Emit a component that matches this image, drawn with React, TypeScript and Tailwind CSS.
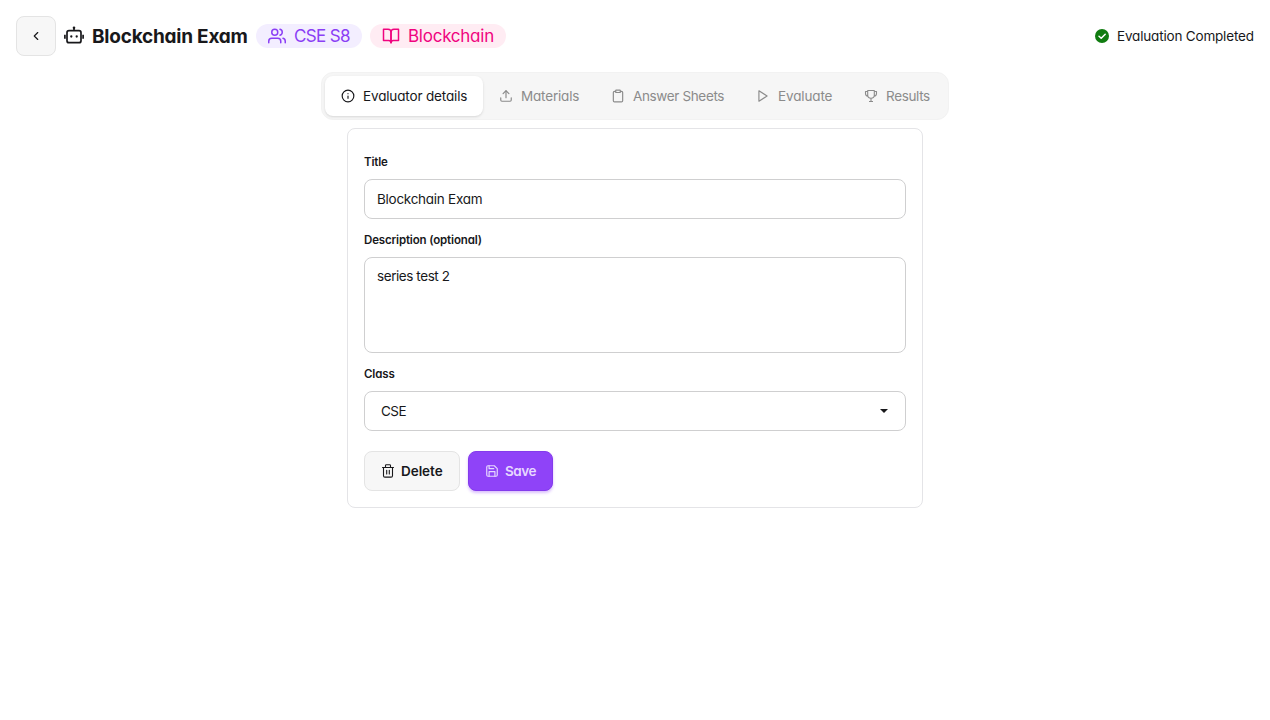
import React from "react";
import { FiChevronLeft, FiUsers, FiBookOpen, FiInfo, FiUpload, FiClipboard, FiPlay, FiSave } from "react-icons/fi";

type IconProps = { size?: number; className?: string };

function RobotIcon() {
  return (
    <svg width="20" height="20" viewBox="0 0 20 20" fill="none" stroke="currentColor" strokeWidth="1.7" className="shrink-0">
      <rect x="3" y="4.7" width="14" height="12" rx="2" />
      <path d="M10 4.5V2M.9 8.8v4M19.1 8.8v4" />
      <circle cx="10" cy="1.8" r="1.3" fill="currentColor" stroke="none" />
      <circle cx="7.3" cy="10.5" r="1.15" fill="currentColor" stroke="none" />
      <circle cx="12.7" cy="10.5" r="1.15" fill="currentColor" stroke="none" />
    </svg>
  );
}

function TrophyIcon({ size = 14, className }: IconProps) {
  return (
    <svg width={size} height={size} viewBox="0 0 14 14" fill="none" stroke="currentColor" strokeWidth="1.1" strokeLinejoin="round" className={className}>
      <path d="M3.700 1.500h6.600v4.800c0 1.700-1.300 2.900-3.300 2.900S3.700 8 3.700 6.300zM7 9.200v3.200M5 12.500h4M3.700 2.500H1.500v2c0 1.500.9 2.500 2.400 2.700M10.300 2.500h2.200v2c0 1.500-.9 2.500-2.400 2.700" />
    </svg>
  );
}

function TrashIcon() {
  return (
    <svg width="14" height="14" viewBox="0 0 14 14" fill="none" stroke="currentColor" strokeWidth="1.1" strokeLinecap="round" strokeLinejoin="round" className="shrink-0">
      <path d="M1.500 3.500h11M4.500 3.200V1.600c0-.5.3-.8.8-.8h3.400c.5 0 .8.3.8.8v1.600M2.500 3.500v8.200c0 .8.600 1.400 1.400 1.400h6.200c.8 0 1.400-.6 1.400-1.400V3.500M5.700 6.300v3.700M8.300 6.300v3.700" />
    </svg>
  );
}

const tabs = [
  { label: "Evaluator details", icon: FiInfo, box: "w-[158px] bg-white shadow", text: "tracking-[-0.15px]" },
  { label: "Materials", icon: FiUpload, box: "w-[112px] text-[#8b8b8b]", text: "tracking-[-0.18px]" },
  { label: "Answer Sheets", icon: FiClipboard, box: "w-[145px] text-[#8b8b8b]", text: "tracking-[-0.36px]" },
  { label: "Evaluate", icon: FiPlay, box: "w-[108px] text-[#8b8b8b]", text: "tracking-[-0.14px]" },
  { label: "Results", icon: TrophyIcon, box: "w-[97px] text-[#8b8b8b]", text: "tracking-[-0.35px]" },
];

const labelStyle = "pt-px text-[11.5px] leading-4 font-semibold tracking-[-0.15px]";

export default function App() {
  return (
    <main className="min-h-screen bg-white p-4 font-['Inter',sans-serif] text-[13.5px] text-[#18181b] [font-feature-settings:'cv11']">
      <header className="flex h-10 items-center gap-2 whitespace-nowrap">
        <button aria-label="Back" className="flex size-10 items-center justify-center rounded-lg border border-[#e4e4e4] bg-[#f7f7f7]">
          <FiChevronLeft size={14} />
        </button>
        <RobotIcon />
        <h1 className="w-[156px] pt-0.5 text-[19px] font-bold tracking-[-0.23px]">Blockchain Exam</h1>
        <div className="flex h-6 w-[106px] items-center gap-2 rounded-full bg-[#f3eeff] px-3 text-[17px] text-[#8b3ff5]">
          <FiUsers size={18} className="shrink-0" />
          <span className="pt-0.5 tracking-[-0.65px]">CSE S8</span>
        </div>
        <div className="flex h-6 w-[136px] items-center gap-2 rounded-full bg-[#ffecf3] px-3 text-[17px] text-[#f0047f]">
          <FiBookOpen size={18} className="shrink-0" />
          <span className="pt-0.5 tracking-[-0.25px]">Blockchain</span>
        </div>
        <div className="ml-auto flex items-center gap-2">
          <svg width="14" height="14" viewBox="0 0 14 14" className="shrink-0">
            <circle cx="7" cy="7" r="7" fill="#107c10" />
            <path d="M4 7.200 6.200 9.300 10.200 5.200" fill="none" stroke="white" strokeWidth="1.500" strokeLinecap="round" strokeLinejoin="round" />
          </svg>
          <span className="w-[137px] pt-px tracking-[-0.18px]">Evaluation Completed</span>
        </div>
      </header>

      <nav className="mx-auto mt-4 flex w-[628px] rounded-xl border border-[#f2f2f2] bg-[#f6f6f6] p-[3px]">
        {tabs.map(({ label, icon: Icon, box, text }) => (
          <button key={label} className={`${box} flex h-10 items-center gap-2 rounded-lg pl-4 whitespace-nowrap`}>
            <Icon size={14} className="shrink-0" />
            <span className={`${text} pt-px`}>{label}</span>
          </button>
        ))}
      </nav>

      <section className="mx-auto mt-2 flex h-[380px] w-[576px] flex-col rounded-lg border border-[#e4e4e7] px-4 pt-6">
        <label htmlFor="title" className={labelStyle}>Title</label>
        <input id="title" defaultValue="Blockchain Exam" className="mt-[9px] h-10 w-full shrink-0 rounded-lg border border-[#cfcfd0] px-3 tracking-[-0.27px] outline-none" />
        <label htmlFor="description" className={`${labelStyle} mt-3`}>Description (optional)</label>
        <textarea id="description" defaultValue="series test 2" className="mt-[9px] h-24 w-full shrink-0 resize-none rounded-lg border border-[#cfcfd0] px-3 py-2 leading-5 tracking-[-0.43px] outline-none" />
        <label className={`${labelStyle} mt-3`}>Class</label>
        <button className="mt-[9px] flex h-10 w-full shrink-0 items-center justify-between rounded-lg border border-[#cfcfd0] px-4">
          <span className="pt-px tracking-[-0.5px]">CSE</span>
          <svg width="8" height="4" viewBox="0 0 8 4" className="mr-px"><path d="M0 0h8L4 4z" fill="currentColor" /></svg>
        </button>
        <div className="mt-5 flex gap-2 font-semibold">
          <button className="flex h-10 w-24 items-center gap-1.5 rounded-lg border border-[#e4e4e4] bg-[#f7f7f7] px-4">
            <TrashIcon />
            <span className="pt-px tracking-[-0.05px]">Delete</span>
          </button>
          <button className="flex h-10 w-[85px] items-center gap-1.5 rounded-lg border border-[#843bec] bg-[#8f43f8] px-4 text-[#e6d8ff] shadow-[0_2px_3px_#8f43f855]">
            <FiSave size={14} className="shrink-0" />
            <span className="pt-px tracking-[-0.5px]">Save</span>
          </button>
        </div>
      </section>
    </main>
  );
}
